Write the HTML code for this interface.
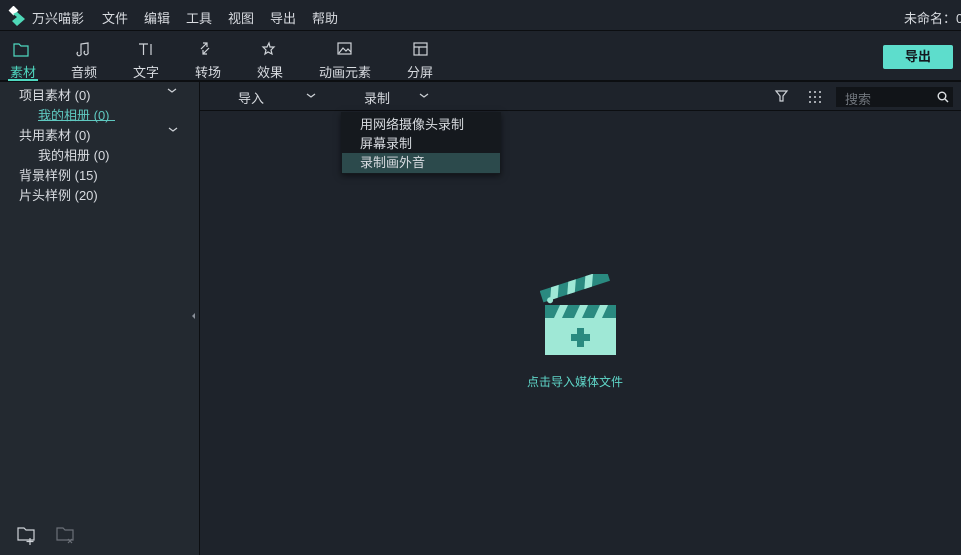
<!DOCTYPE html><html><head><meta charset="utf-8"><style>
*{margin:0;padding:0;box-sizing:border-box}
body{width:961px;height:555px;background:#1e232b;font-family:"Liberation Sans","Noto Sans CJK SC",sans-serif;color:#d8dbe0;font-size:13px;position:relative;overflow:hidden}
.a{position:absolute;white-space:nowrap}
</style></head><body>
<div class="a" style="left:0;top:0;width:961px;height:31px;background:#1e232b;border-bottom:1px solid #0c0e11"></div>
<svg class="a" style="left:8px;top:6px" width="18" height="20"><rect x="2" y="1" width="7" height="7" fill="#fff" transform="rotate(45 5.5 4.5)"/><polygon points="9,6 17,13 9,20 4,15 9,11 5,8" fill="#4fd8b8"/></svg>
<div class="a" style="left:32px;top:8px;font-size:13px">万兴喵影</div>
<div class="a" style="left:102px;top:8px">文件</div>
<div class="a" style="left:144px;top:8px">编辑</div>
<div class="a" style="left:186px;top:8px">工具</div>
<div class="a" style="left:228px;top:8px">视图</div>
<div class="a" style="left:270px;top:8px">导出</div>
<div class="a" style="left:312px;top:8px">帮助</div>
<div class="a" style="left:904px;top:8px">未命名：0</div>
<div class="a" style="left:0;top:80px;width:961px;height:2px;background:#0c0e11"></div>
<svg class="a" style="left:0;top:40px" width="450" height="18" fill="none" stroke="#cfd3d8" stroke-width="1.2">
<path d="M14 4h5l2 2h7v10h-14z" stroke="#4fd8c0"/>
<path d="M81 13V4l7-1v9M81 13a2 2 0 1 1-3-1M88 12a2 2 0 1 1-3-1"/>
<path d="M139 4h9M143.5 4v11M151 4v11"/>
<path d="M201 9l6-6M203 3h4v4M209 8l-6 6M207 14h-4v-4"/>
<path d="M269 3l1 4 4 0-3 3 1 4-4-2-3 2 1-4-3-3 4 0z"/>
<rect x="338" y="3" width="13" height="11"/><path d="M339 13l4-5 3 3 2-2 3 3"/>
<rect x="414" y="3" width="13" height="12"/><path d="M414 7h13M419 7v8"/>
</svg>
<div class="a" style="left:10px;top:62px;color:#4fd8c0">素材</div>
<div class="a" style="left:8px;top:79px;width:30px;height:2px;background:#4fd8c0"></div>
<div class="a" style="left:71px;top:62px">音频</div>
<div class="a" style="left:133px;top:62px">文字</div>
<div class="a" style="left:195px;top:62px">转场</div>
<div class="a" style="left:257px;top:62px">效果</div>
<div class="a" style="left:319px;top:62px">动画元素</div>
<div class="a" style="left:407px;top:62px">分屏</div>
<div class="a" style="left:883px;top:45px;width:70px;height:24px;background:#5dddcc;border-radius:2px;color:#13181e;font-weight:bold;text-align:center;line-height:24px">导出</div>
<div class="a" style="left:0;top:82px;width:199px;height:473px;background:#232930"></div>
<div class="a" style="left:199px;top:82px;width:1px;height:473px;background:#0c0e11"></div>
<div class="a" style="left:200px;top:110px;width:761px;height:1px;background:#0c0e11"></div>
<div class="a" style="left:19px;top:85px">项目素材 (0)</div>
<div class="a" style="left:38px;top:105px;color:#5fc8c0">我的相册 (0)</div>
<div class="a" style="left:38px;top:120px;width:77px;height:1px;background:#5fc8c0"></div>
<div class="a" style="left:19px;top:125px">共用素材 (0)</div>
<div class="a" style="left:38px;top:145px">我的相册 (0)</div>
<div class="a" style="left:19px;top:165px">背景样例 (15)</div>
<div class="a" style="left:19px;top:185px">片头样例 (20)</div>
<svg class="a" style="left:0;top:84px" width="961" height="20" fill="none" stroke="#cfd3d8" stroke-width="1.2">
<path d="M168 5l4 3 4-3"/>
<path d="M307 10l4 3 4-3M420 10l4 3 4-3"/>
<path d="M776 7h11l-4 5v5h-3v-5z"/>
</svg>
<svg class="a" style="left:168px;top:126px" width="10" height="8" fill="none" stroke="#cfd3d8" stroke-width="1.2"><path d="M1 2l4 3 4-3"/></svg>
<div class="a" style="left:238px;top:88px">导入</div>
<div class="a" style="left:364px;top:88px">录制</div>
<svg class="a" style="left:808px;top:90px" width="14" height="14" fill="#cfd3d8"><circle cx="2" cy="2" r="1"/><circle cx="7" cy="2" r="1"/><circle cx="12" cy="2" r="1"/><circle cx="2" cy="7" r="1"/><circle cx="7" cy="7" r="1"/><circle cx="12" cy="7" r="1"/><circle cx="2" cy="12" r="1"/><circle cx="7" cy="12" r="1"/><circle cx="12" cy="12" r="1"/></svg>
<div class="a" style="left:836px;top:87px;width:117px;height:20px;background:#111418"></div>
<div class="a" style="left:845px;top:89px;color:#70757c">搜索</div>
<svg class="a" style="left:937px;top:91px" width="12" height="12" fill="none" stroke="#e0e3e6" stroke-width="1.4"><circle cx="5" cy="5" r="3.8"/><path d="M8 8l3 3"/></svg>
<div class="a" style="left:192px;top:313px;width:0;height:0;border-top:3px solid transparent;border-bottom:3px solid transparent;border-right:3px solid #8a9099"></div>
<div class="a" style="left:341px;top:112px;width:160px;height:62px;background:#15191e;box-shadow:0 2px 6px rgba(0,0,0,.5)"></div>
<div class="a" style="left:342px;top:153px;width:158px;height:20px;background:#2c4a4c"></div>
<div class="a" style="left:360px;top:114px">用网络摄像头录制</div>
<div class="a" style="left:360px;top:133px">屏幕录制</div>
<div class="a" style="left:360px;top:152px">录制画外音</div>
<svg class="a" style="left:540px;top:274px" width="80" height="84">
<g transform="rotate(-18 5 30)"><rect x="4" y="16" width="70" height="12" fill="#2a8a80"/><path d="M16 16h8l-5 12h-8zM34 16h8l-5 12h-8zM52 16h8l-5 12h-8z" fill="#9fe8d6"/><circle cx="11" cy="28" r="3" fill="#9fe8d6"/></g>
<rect x="5" y="31" width="71" height="50" fill="#9fe8d6"/>
<rect x="5" y="31" width="71" height="13" fill="#2a8a80"/>
<path d="M14 44l6-13h8l-6 13zM34 44l6-13h8l-6 13zM54 44l6-13h8l-6 13z" fill="#9fe8d6"/>
<path d="M37 54h7v6h6v7h-6v6h-7v-6h-6v-7h6z" fill="#2a8a80"/>
</svg>
<div class="a" style="left:527px;top:373px;color:#5fd6c8;font-size:12px">点击导入媒体文件</div>
<svg class="a" style="left:16px;top:526px" width="64" height="20" fill="none" stroke-width="1.2">
<path d="M2 2h6l2 2h8v10H2z" stroke="#cfd3d8"/><path d="M14 12v7M10.5 15.5h7" stroke="#cfd3d8"/>
<path d="M41 2h6l2 2h8v10H41z" stroke="#6b7078"/><path d="M52 13l4 4M56 13l-4 4" stroke="#6b7078"/>
</svg>
</body></html>
